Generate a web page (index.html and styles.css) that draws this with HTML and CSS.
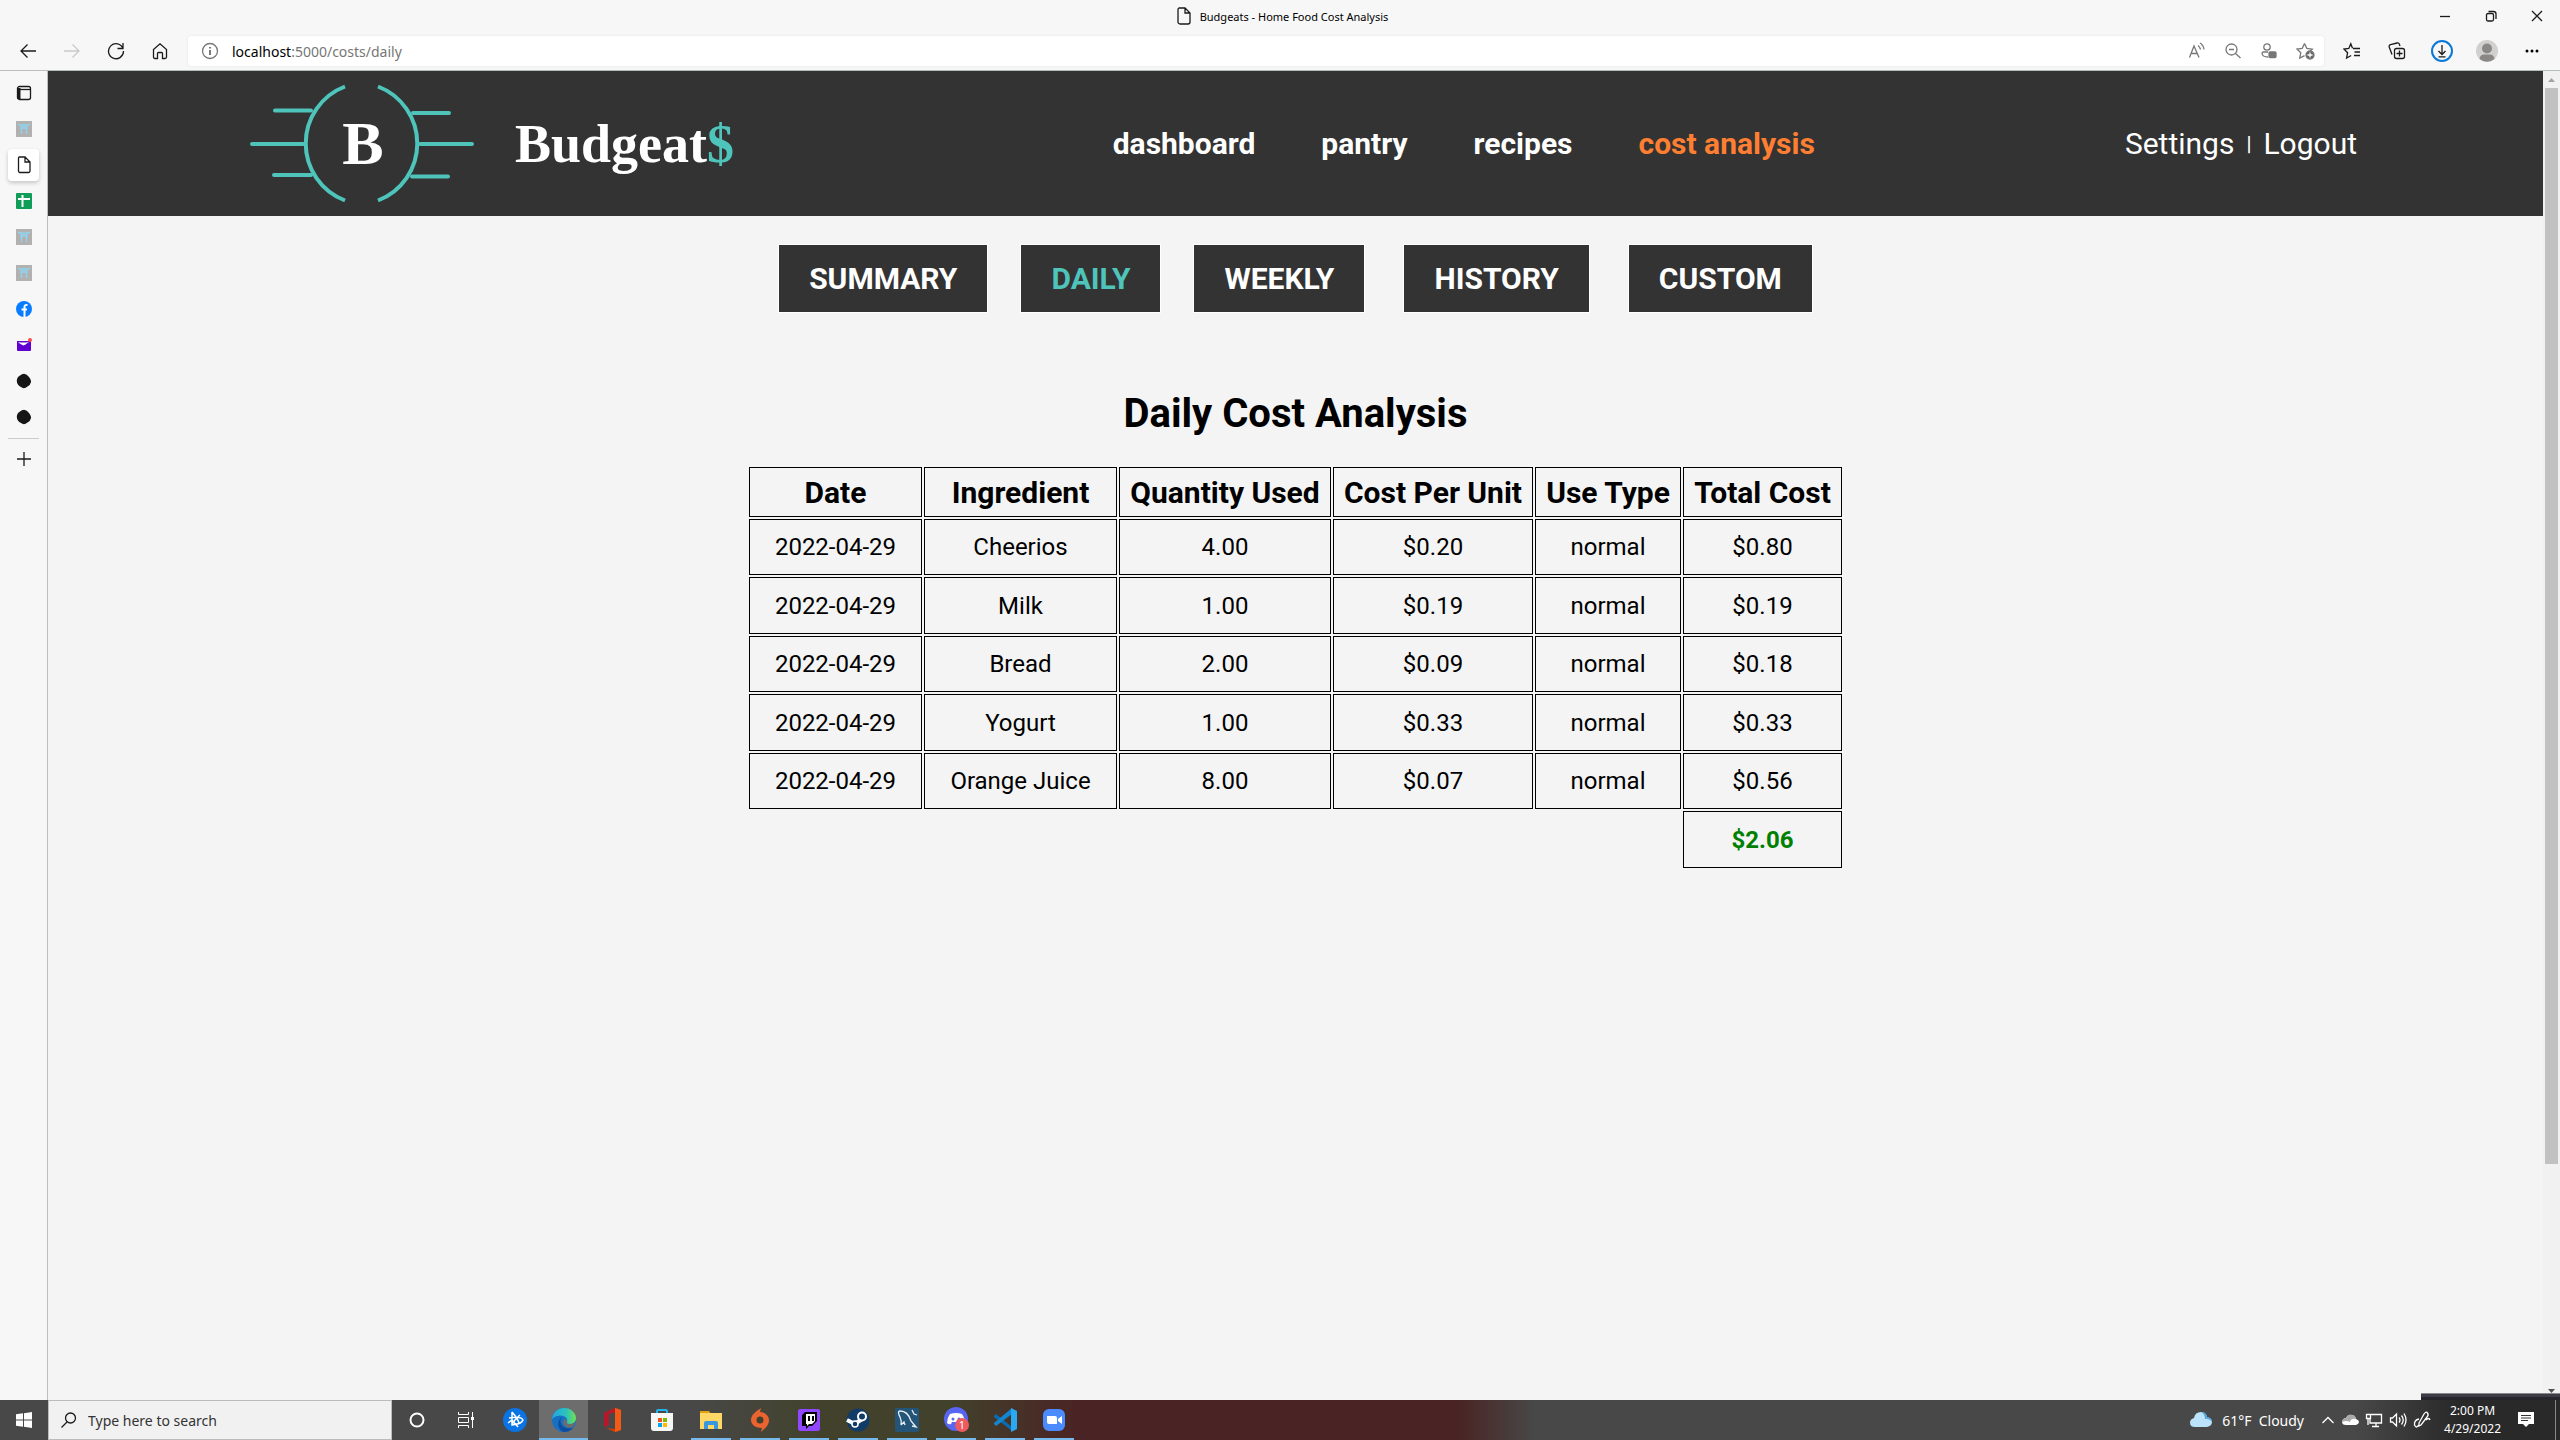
FILE: index.html
```html
<!DOCTYPE html>
<html lang="en">
<head>
<meta charset="utf-8">
<title>Budgeats - Home Food Cost Analysis</title>
<link rel="stylesheet" href="styles.css">
</head>
<body>
<div class="titlebar">
  <div class="window-title">
    <svg width="16" height="18" viewBox="0 0 16 18" class="line"><path d="M3 1h6l5 5v9a2 2 0 0 1-2 2H4a2 2 0 0 1-2-2V2.500q0-1.500 1.500-1.500M9 1v5h5"/></svg>
    <span>Budgeats - Home Food Cost Analysis</span>
  </div>
  <div class="window-controls">
    <button aria-label="Minimize"><svg width="12" height="12" class="line"><path d="M1 6.500h10"/></svg></button>
    <button aria-label="Restore"><svg width="12" height="12" class="line"><rect x="1.500" y="3.500" width="7" height="7.500" rx="1.500"/><path d="M3.500 1.500h5q2.500 0 2.500 2.500v5"/></svg></button>
    <button aria-label="Close"><svg width="12" height="12" class="line"><path d="M1 1l10 10M11 1L1 11"/></svg></button>
  </div>
</div>
<div class="toolbar">
  <div class="nav-buttons">
    <button aria-label="Back"><svg width="18" height="16" class="line"><path d="M17 8H2M8.500 1.500L2 8l6.500 6.500"/></svg></button>
    <button aria-label="Forward" class="off"><svg width="18" height="16" class="line"><path d="M1 8h15M9.500 1.500L16 8l-6.500 6.500"/></svg></button>
    <button aria-label="Refresh"><svg width="18" height="18" class="line"><path d="M16 6.500A7.500 7.500 0 1 0 16.500 9M16 1v5.500h-5.500"/></svg></button>
    <button aria-label="Home"><svg width="16" height="18" class="line"><path d="M1.500 7.500L8 1.800l6.500 5.700V15q0 1.500-1.500 1.500h-2.500v-5q0-1-1-1h-3q-1 0-1 1v5H3q-1.500 0-1.500-1.500z"/></svg></button>
  </div>
  <div class="address">
    <svg width="18" height="18" class="line grey"><circle cx="9" cy="9" r="7.500"/><path d="M9 8v5M9 5v1.500" stroke-width="2"/></svg>
    <span class="url"><b>localhost</b>:5000/costs/daily</span>
    <div class="address-actions">
      <svg width="18" height="18" class="line grey"><path d="M1.500 15.500L6 4l5 11.500M3 11.500h6.500M10 3.500q2 1.500 2.500 4M12 1q3.500 2 4 6.500"/></svg>
      <svg width="18" height="18" class="line grey"><circle cx="7.500" cy="7.500" r="5.500"/><path d="M5 7.500h5M11.500 11.500l5 4.500"/></svg>
      <svg width="18" height="18" class="line grey"><circle cx="7" cy="5" r="3.200"/><path d="M8 10H3.500Q2 10 2 11.500 2.500 15 8 15"/><rect x="9" y="10" width="7" height="5.500" rx="1" fill="#777"/></svg>
      <svg width="20" height="18" viewBox="0 0 20 18" class="line grey"><path d="M8.500 1.500l2.300 4.800 5.400.8-2 1.800M8.500 1.500L6.200 6.300.9 7l3.900 3.700-1 5.400 4.700-2.500"/><circle cx="14" cy="13" r="4" fill="#666"/><path d="M14 10.500v5M11.500 13h5" stroke="#fff"/></svg>
    </div>
  </div>
  <div class="browser-actions">
    <button aria-label="Favorites"><svg width="18" height="18" class="line"><path d="M10 6.500h7M11.500 10H17M11 13.500h6M9.500 6.200L7.800 1.800 5.800 6.400 1 7l3.600 3.700-1 5.300 4.600-2.500"/></svg></button>
    <button aria-label="Collections"><svg width="18" height="18" class="line"><rect x="6.500" y="6.500" width="10" height="10" rx="2"/><path d="M11.500 8.500v6M8.500 11.500h6M4 12.500L1.200 5Q.8 3.200 2.500 2.700L9 1q2-.3 2.500 1.500l.5 1.500"/></svg></button>
    <button aria-label="Downloads"><svg width="22" height="22" class="line"><circle cx="11" cy="11" r="10" stroke="#0a78d7" stroke-width="2"/><path d="M11 5v9M7.500 11l3.500 3.500 3.500-3.500M7.500 16.800h7"/></svg></button>
    <button aria-label="Profile"><svg width="22" height="22"><circle cx="11" cy="11" r="11" fill="#d2d0ce"/><circle cx="11" cy="8.500" r="5" fill="#8a8886"/><path d="M3.500 19Q4 14.500 8 14.500h6q4 0 4.500 4.500-7.500 5.500-15 0" fill="#8a8886"/></svg></button>
    <button aria-label="More"><svg width="16" height="16"><circle cx="3" cy="8" r="1.500"/><circle cx="8" cy="8" r="1.500"/><circle cx="13" cy="8" r="1.500"/></svg></button>
  </div>
</div>
<div class="workspace">
  <aside class="tabs">
    <button class="tab" aria-label="Tab actions"><svg width="16" height="16" class="line"><rect x="1.500" y="1.500" width="13" height="13" rx="2"/><path d="M2 4.500h12"/><path d="M3 3v11" stroke-width="3"/></svg></button>
    <button class="tab" aria-label="Shrine tab"><svg width="16" height="16"><use href="#torii"/></svg></button>
    <button class="tab current" aria-label="Budgeats tab"><svg width="16" height="18" viewBox="0 0 16 18" class="line"><path d="M3.500 1H9l5 5v9a1.500 1.500 0 0 1-1.500 1.500h-9A1.500 1.500 0 0 1 2.500 15V2q0-1 1-1M9 1v5h5"/></svg></button>
    <button class="tab" aria-label="Sheets"><svg width="16" height="16"><rect width="16" height="16" rx="1" fill="#0f9d58"/><path d="M2 6h12M6.500 2v12" stroke="#fff" stroke-width="2"/></svg></button>
    <button class="tab" aria-label="Shrine tab"><svg width="16" height="16"><use href="#torii"/></svg></button>
    <button class="tab" aria-label="Shrine tab"><svg width="16" height="16"><use href="#torii"/></svg></button>
    <button class="tab" aria-label="Facebook"><svg width="16" height="16"><circle cx="8" cy="8" r="8" fill="#0a7cff"/><path d="M8.500 16V6q0-2.500 3-2M5.500 8.500h5.500" fill="none" stroke="#fff" stroke-width="2"/></svg></button>
    <button class="tab" aria-label="Mail"><svg width="16" height="16"><path d="M1 4h14v9q0 1-1 1H2q-1 0-1-1z" fill="#6001d2"/><path d="M2 5q5 1 11 0-4 3-5.500 3.500Q5 8 2 5" fill="#fff"/><circle cx="14" cy="3" r="2" fill="#ff4b4b"/></svg></button>
    <button class="tab" aria-label="Dark tab"><svg width="16" height="16"><use href="#blob"/></svg></button>
    <button class="tab" aria-label="Dark tab"><svg width="16" height="16"><use href="#blob"/></svg></button>
    <button class="tab add" aria-label="New tab"><svg width="16" height="16" class="line"><path d="M8 1v14M1 8h14"/></svg></button>
    <svg width="0" height="0" class="defs"><defs>
      <g id="torii"><rect width="16" height="16" fill="#b3b0b0"/><path d="M2 3.500q6 1.500 12 0M4 7h8M5.500 4v9M10.500 4v9M8 4v3" fill="none" stroke="#8fd4f0" stroke-width="1.400"/></g>
      <path id="blob" d="M8 .8Q11 1 13 4q2.500 3 2 5-.5 3-3.500 4.500Q8 16.500 5 14 1 12 .8 8 .8 4 4 2.500 6 .8 8 .8" fill="#161616"/>
    </defs></svg>
  </aside>
  <div class="page">
    <header class="site-header">
      <a href="#" class="brand">
        <svg class="emblem" width="226" height="122" viewBox="0 0 226 122" role="img" aria-label="B">
          <g fill="none" stroke="#4ec4bb" stroke-width="4">
            <path d="M97 3.500A61 61 0 0 0 97 117.500M130 3.500A61 61 0 0 1 130 117.500"/>
            <path stroke-linecap="round" d="M27 27.500h36M4 61h51M26 92h37M165 30h36M172 61h52M164 93.500h36"/>
          </g>
          <text x="115" y="81" text-anchor="middle">B</text>
        </svg>
        <span class="wordmark">Budgeat<i>$</i></span>
      </a>
      <nav class="main-nav">
        <a href="#">dashboard</a><a href="#">pantry</a><a href="#">recipes</a><a href="#" class="active">cost analysis</a>
      </nav>
      <div class="account"><a href="#">Settings</a><span>|</span><a href="#">Logout</a></div>
    </header>
    <main>
      <nav class="periods">
        <button>SUMMARY</button><button class="active">DAILY</button><button>WEEKLY</button><button class="wide">HISTORY</button><button class="wide">CUSTOM</button>
      </nav>
      <h1>Daily Cost Analysis</h1>
      <table>
        <colgroup><col class="c-date"><col class="c-ingredient"><col class="c-quantity"><col class="c-unit"><col class="c-type"><col class="c-total"></colgroup>
        <thead><tr><th>Date</th><th>Ingredient</th><th>Quantity Used</th><th>Cost Per Unit</th><th>Use Type</th><th>Total Cost</th></tr></thead>
        <tbody>
          <tr><td>2022-04-29</td><td>Cheerios</td><td>4.00</td><td>$0.20</td><td>normal</td><td>$0.80</td></tr>
          <tr><td>2022-04-29</td><td>Milk</td><td>1.00</td><td>$0.19</td><td>normal</td><td>$0.19</td></tr>
          <tr><td>2022-04-29</td><td>Bread</td><td>2.00</td><td>$0.09</td><td>normal</td><td>$0.18</td></tr>
          <tr><td>2022-04-29</td><td>Yogurt</td><td>1.00</td><td>$0.33</td><td>normal</td><td>$0.33</td></tr>
          <tr><td>2022-04-29</td><td>Orange Juice</td><td>8.00</td><td>$0.07</td><td>normal</td><td>$0.56</td></tr>
          <tr><td colspan="5" class="blank"></td><td class="sum">$2.06</td></tr>
        </tbody>
      </table>
    </main>
  </div>
  <div class="scrollbar">
    <svg width="17" height="17"><path d="M5 11l3.500-4 3.500 4z" fill="#a3a3a3"/></svg>
    <div class="thumb"></div>
    <svg width="17" height="17"><path d="M5 6l3.500 4L12 6z" fill="#505050"/></svg>
  </div>
</div>
<footer class="taskbar">
  <div class="peek"></div>
  <button class="start" aria-label="Start"><svg width="16" height="16" fill="#fff"><path d="M0 2.300l7-1v6.200H0zM8 1.200L16 0v7.500H8zM0 8.500h7v6.200l-7-1zM8 8.500h8V16l-8-1.200z"/></svg></button>
  <label class="search"><svg width="18" height="18" class="line"><circle cx="10.500" cy="7" r="5"/><path d="M7 11l-5.500 5.500"/></svg><input type="text" placeholder="Type here to search" aria-label="Search"></label>
  <div class="apps">
    <button aria-label="Cortana"><svg width="24" height="24"><circle cx="12" cy="12" r="6.500" fill="none" stroke="#fff" stroke-width="2"/></svg></button>
    <button aria-label="Task view"><svg width="24" height="24" fill="none" stroke="#fff"><path d="M4.500 4v2.500h10V4M4.500 20v-2.500h10V20M4.500 9.500h10v5h-10zM18.500 4v16"/><path d="M17 9h3v3h-3z" fill="#fff" stroke="none"/></svg></button>
    <button aria-label="Battle.net"><svg width="24" height="24"><circle cx="12" cy="12" r="12" fill="#0b74e5"/><path d="M9 4q7 8 7 12M9 4v13q10-1 11-5-2-4-14-2M9 17q2-5 8-10M5 15l4-3 6 7" fill="none" stroke="#fff" stroke-width="1.500"/></svg></button>
    <button class="open focus" aria-label="Edge"><svg width="24" height="24"><defs><linearGradient id="eg" x1="0" x2="1"><stop offset="0" stop-color="#21a7e8"/><stop offset=".6" stop-color="#2cc3b8"/><stop offset="1" stop-color="#70e050"/></linearGradient></defs><circle cx="12" cy="12" r="12" fill="#1671c5"/><path d="M0 11C1 4 6 0 12 0c7 0 12 5 12 10 0 4-3 6-6 6s-4-1-3-2C17 9 8 4 0 11" fill="url(#eg)"/><path d="M10 9c-4 5 0 13 11 11-3 3-6 4-9 4C7 23 3 14 10 9" fill="#0d4f9e"/><path d="M15 14q-1 2 3 2 3 0 5-2-1 4-3 5.500Q13 21 11 15q0-3 2-4 3 1 2 3" fill="#6d6d6d"/></svg></button>
    <button aria-label="Office"><svg width="24" height="24"><path d="M14 0l6 2v20l-6 2-9-4 9 1V4L8 6v11l-5 2V5z" fill="#d83b01"/><path d="M14 0L3 5v14l5-2V6l6-2z" fill="#b5172b"/><path d="M14 0l6 2v20l-6 2z" fill="#f25a16"/></svg></button>
    <button aria-label="Store"><svg width="24" height="24"><path d="M7 6V3q0-1 1-1h8q1 0 1 1v3" fill="none" stroke="#22b4ee" stroke-width="2"/><path d="M1 5h22v15q0 3-3 3H4q-3 0-3-3z" fill="#f6f6f6"/><path fill="#f25022" d="M8 10h4v4H8z"/><path fill="#7fba00" d="M13 10h4v4h-4z"/><path fill="#00a4ef" d="M8 15h4v4H8z"/><path fill="#ffb900" d="M13 15h4v4h-4z"/></svg></button>
    <button class="open" aria-label="Files"><svg width="24" height="24"><path d="M1 3h9l2 3H1z" fill="#e2a112"/><path d="M1 5h22v16H1z" fill="#ffd766"/><path d="M5 21v-6q0-2 2-2h10q2 0 2 2v6h-4v-4H9v4z" fill="#3b97dc"/></svg></button>
    <button class="open" aria-label="Origin"><svg width="24" height="24"><path d="M13 0l-1 4c5 0 9 4 9 8 0 6-5 9-8 12l1-4c-6 0-11-3-11-8 0-6 6-9 10-12" fill="#eb6430"/><circle cx="12" cy="12" r="3.500" fill="#40402e"/></svg></button>
    <button class="open" aria-label="Twitch"><svg width="24" height="24"><rect x="1" y="1" width="22" height="22" rx="2" fill="#9146ff"/><path d="M8 4h12v9l-5 5h-3l-3 3v-3H5V7z" fill="#000"/><path d="M9 6h9v7l-3 3h-3l-2 2v-2H9z" fill="#fff"/><path d="M12 8v5M16 8v5" stroke="#000" stroke-width="2"/></svg></button>
    <button class="open" aria-label="Steam"><svg width="24" height="24"><circle cx="12" cy="12" r="11.500" fill="#123c68"/><path d="M1 12l8 4 7-5" stroke="#fff" stroke-width="4" fill="none"/><circle cx="16" cy="8.500" r="4" fill="#123c68" stroke="#fff" stroke-width="2"/><circle cx="9" cy="16" r="3" fill="#123c68" stroke="#fff" stroke-width="1.500"/></svg></button>
    <button class="open" aria-label="Workbench"><svg width="24" height="24"><rect width="24" height="24" rx="2" fill="#245579"/><path d="M6 17q1-4-1-8-3-6 0-6 8 0 11 10l5 6-4-1M6 17l3-3 1 3M17 2l2 4 3 1" fill="none" stroke="#e6eef4" stroke-width="1.300"/></svg></button>
    <button class="open" aria-label="Discord"><svg width="26" height="26"><circle cx="13" cy="12" r="12" fill="#5865f2"/><path d="M7 7q6-2 12 0 3 4 3 9-2 2-4 1l-1-2H9l-1 2q-2 1-4-1 0-5 3-9" fill="#fff"/><circle cx="10" cy="12" r="1.500" fill="#5865f2"/><circle cx="16" cy="12" r="1.500" fill="#5865f2"/><circle cx="19" cy="18" r="7" fill="#ed5a5f"/><text x="19" y="22" class="badge-count">1</text></svg></button>
    <button class="open" aria-label="Code"><svg width="24" height="24"><path d="M1 8l2-2 16 13v4L1 9z" fill="#0b6bb0"/><path d="M1 16l2 2L19 6V0L1 15z" fill="#1485cf"/><path d="M18 0l6 3v18l-6 3z" fill="#2aa8f2"/></svg></button>
    <button class="open" aria-label="Zoom"><svg width="24" height="24"><rect x="1" y="1" width="22" height="22" rx="6" fill="#4a8cff"/><path d="M5 8h8q2 0 2 2v6H7q-2 0-2-2zM16 11l4-3v8l-4-3z" fill="#fff"/></svg></button>
  </div>
  <div class="tray">
    <svg width="24" height="20"><path d="M6 17Q1 17 1 12.500 1 9 5 8q1-6 7-6 5 0 6 5 5 1 5 5t-5 5z" fill="#bce3fa"/><path d="M12 2q5 0 6 5 5 1 5 5-3-4-7-3 0-5-4-7" fill="#4fa6e2"/></svg>
    <span class="weather">61°F&nbsp; Cloudy</span>
    <svg width="14" height="12" class="line white"><path d="M1.500 9L7 3.500 12.500 9"/></svg>
    <svg width="18" height="16"><path d="M5 13Q1 13 1 9.500 2 6 5 6q2-4 6-3 3 0 4 4 3 1 3 3t-3 3z" fill="#fff"/><path d="M5 6q2-4 6-3 3 0 4 4-5-1-6 3-3-2-8 0 1-4 4-4" fill="#aaa"/></svg>
    <svg width="18" height="16" class="line white"><path d="M6 2.500h10.500v8.500H5V7M11 11v3M7 14.500h7M1.500 2.500h4v4h-4zM3 7v6"/></svg>
    <svg width="18" height="16" class="line white"><path d="M1.500 6h2l4-4v12l-4-4h-2zM10 5.500q2 2.500 0 5M12.500 3.500q3.500 4.500 0 9M15 1.500q4 6.500 0 13"/></svg>
    <svg width="18" height="18" class="line white"><path d="M6 12L11 3q2-3 3.500-1t-.5 4l-6 8-2 1zM13 9q3-3 4 0M6 8Q1 9 1.500 14q2 4 4 0"/></svg>
    <time class="clock"><span>2:00 PM</span><span>4/29/2022</span></time>
    <svg width="18" height="18"><path d="M1 1h16v12h-5l-3 3-3-3H1z" fill="#fff"/><path d="M4 4.500h10M4 7h10M4 9.500h7" stroke="#333"/></svg>
    <div class="show-desktop"></div>
  </div>
</footer>
</body>
</html>
```

FILE: styles.css
```css
* { box-sizing: border-box; }
body {
  margin: 0;
  height: 100vh;
  display: flex;
  flex-direction: column;
  background: #f7f7f7;
  color: #000;
  font-family: Roboto, "Liberation Sans", sans-serif;
  overflow: hidden;
}
button {
  display: flex;
  align-items: center;
  justify-content: center;
  padding: 0;
  border: 0;
  background: none;
  color: inherit;
  font: inherit;
}
a { color: inherit; text-decoration: none; }
svg { display: block; flex: none; }
.line { fill: none; stroke: #1b1b1b; stroke-width: 1.3; }
.grey { stroke: #777; }
.white { stroke: #fff; }
.defs { position: absolute; }

/* Browser chrome */
.titlebar {
  display: grid;
  grid-template-columns: 1fr auto 1fr;
  align-items: center;
  height: 34px;
  flex: none;
  padding-bottom: 2px;
  font: 11px "Noto Sans", sans-serif;
}
.window-title { grid-column: 2; display: flex; align-items: center; gap: 8px; padding-left: 4px; }
.window-controls { display: flex; justify-content: flex-end; }
.window-controls button { width: 46px; height: 32px; }
.toolbar { display: flex; align-items: center; height: 36px; flex: none; padding: 0 6px 2px; }
.nav-buttons { display: flex; }
.nav-buttons button { width: 44px; height: 30px; }
.off { opacity: .2; }
.address {
  flex: 1;
  display: flex;
  align-items: center;
  gap: 13px;
  height: 30px;
  margin-left: 6px;
  padding: 0 8px 0 13px;
  border-radius: 4px;
  background: #fff;
  box-shadow: 0 0 3px #e4e4e4;
}
.url { color: #767676; font: 14px "Noto Sans", sans-serif; }
.url b { color: #000; font-weight: 400; }
.address-actions { display: flex; gap: 18px; margin-left: auto; }
.browser-actions { display: flex; margin-left: 6px; }
.browser-actions button { width: 44px; height: 30px; margin-right: 1px; }
.browser-actions button:last-child { margin-right: 0; }
.workspace { flex: 1; display: flex; min-height: 0; }
.tabs {
  width: 48px;
  flex: none;
  display: flex;
  flex-direction: column;
  align-items: center;
  gap: 4px;
  padding-top: 6px;
  border-right: 1px solid #bdbdbd;
  border-top: 1px solid #bdbdbd;
}
.tab { width: 31px; height: 32px; border-radius: 4px; }
.current { background: #fff; box-shadow: 0 2px 4px #0003; }
.add { border-top: 1px solid #ccc; border-radius: 0; height: 40px; margin-top: 1px; }

/* Site */
.page { flex: 1; min-width: 0; border-top: 1px solid #b5bdba; background: #f4f4f4; }
.site-header {
  display: grid;
  grid-template-columns: 41% 1fr auto;
  align-items: center;
  height: 145px;
  padding: 0 186px 0 200px;
  background: #333;
  color: #fff;
  font-size: 30px;
}
.brand { display: flex; align-items: center; gap: 41px; font-family: "Liberation Serif", serif; font-weight: 700; }
.emblem text { fill: #fff; font-size: 62px; }
.wordmark { font-size: 54px; }
.wordmark i { color: #4ec4bb; font-style: normal; }
.main-nav { display: flex; gap: 66px; font-weight: 700; }
.main-nav .active { color: #ff7f32; }
.account { display: flex; align-items: center; gap: 12px; }
.account span { font-size: 20px; font-weight: 500; }
main { display: flex; flex-direction: column; align-items: center; }
.periods { display: flex; gap: 32px; padding-top: 28px; }
.periods button {
  height: 69px;
  padding: 0 30px;
  border: 1px solid #fff;
  background: #333;
  color: #fff;
  font-size: 30px;
  font-weight: 700;
}
.periods .active { color: #4ec4bb; }
.periods .wide { margin-left: 6px; }
h1 { margin: 77px 0 27px; font-size: 40px; line-height: 48px; font-weight: 700; }
table { table-layout: fixed; border-collapse: separate; border-spacing: 2px; text-align: center; font-size: 24px; }
th { height: 50px; padding: 0; border: 1px solid #000; font-size: 30px; }
td { height: 57px; padding: 0; border: 1px solid #000; }
tr:nth-child(odd) td { height: 56px; }
.c-date { width: 173px; }
.c-ingredient { width: 193px; }
.c-quantity { width: 212px; }
.c-unit { width: 200px; }
.c-type { width: 146px; }
.c-total { width: 159px; }
.blank { border: 0; }
.sum { color: green; font-weight: 700; }
.scrollbar { width: 17px; display: flex; flex-direction: column; align-items: center; border-top: 1px solid #b5bdba; background: #f1f1f1; }
.thumb { width: 13px; height: 81%; margin-bottom: auto; background: #c1c1c1; }

/* Taskbar */
.taskbar {
  position: relative;
  display: flex;
  height: 40px;
  flex: none;
  color: #fff;
  background: linear-gradient(90deg, #484848 27%, #42422c 32%, #42422c 37%, #4a2424 42%, #4a2424 51%, #4a2424 57%, #484848 60%, #484848 92%, #292929 96%);
  font: 14px "Noto Sans", sans-serif;
}
.peek { position: absolute; right: 0; bottom: 100%; width: 139px; height: 7px; border-top: 1px solid #888; background: linear-gradient(#3d3b46 50%, #26252b 50%); }
.start { width: 48px; }
.search { display: flex; align-items: center; gap: 10px; width: 344px; padding-left: 11px; border: 1px solid #bbb; background: #f1f1f1; }
.search input { flex: 1; min-width: 0; padding: 0; border: 0; background: none; font: inherit; outline: 0; }
.search input::placeholder { color: #333; opacity: 1; }
.apps { display: flex; }
.apps button { width: 49px; padding: 0; }
.apps .open { background: linear-gradient(#76b9ed, #76b9ed) center bottom / 40px 2px no-repeat; }
.apps .focus { background-color: #6d6d6d; background-size: 100% 2px; }
.badge-count { fill: #fff; font: 11px "Noto Sans", sans-serif; text-anchor: middle; }
.tray { display: flex; align-items: center; gap: 6px; margin-left: auto; }
.weather { margin: 0 11px 0 3px; }
.clock { display: flex; flex-direction: column; align-items: center; margin: 0 10px 0 7px; font-size: 12px; line-height: 18px; }
.show-desktop { width: 5px; height: 40px; margin-left: 14px; border-left: 1px solid #888; }
```
